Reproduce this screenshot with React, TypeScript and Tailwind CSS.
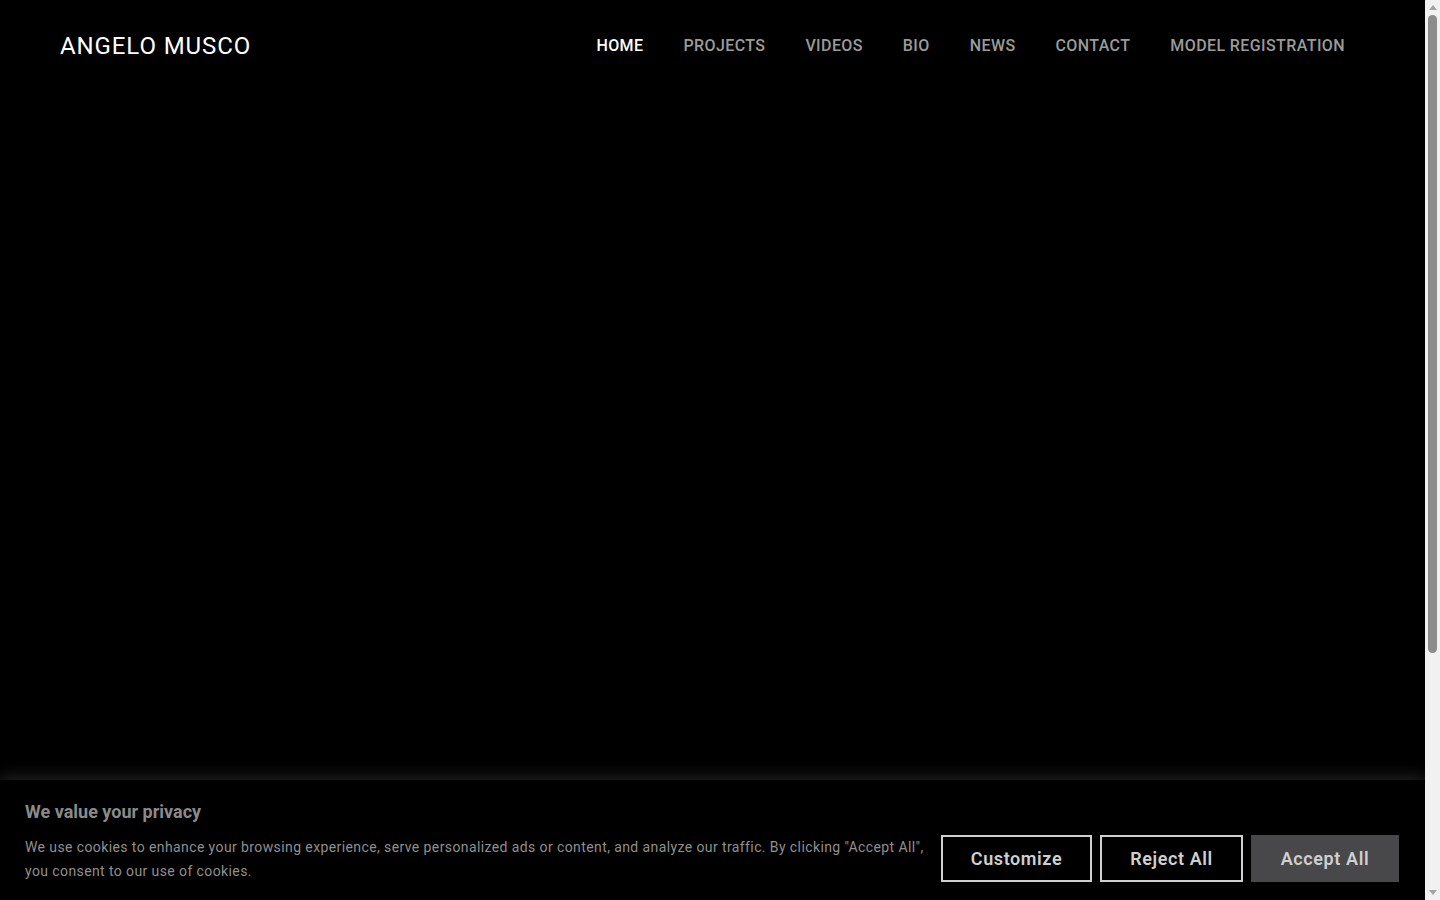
import React from "react";

const nav = ["HOME", "PROJECTS", "VIDEOS", "BIO", "NEWS", "CONTACT", "MODEL REGISTRATION"];

export default function App() {
  return (
    <div className="bg-black h-screen w-full overflow-hidden flex" style={{ fontFamily: "Roboto, 'Noto Sans', sans-serif" }}>
      <div className="flex-1 flex flex-col min-w-0">
        <header className="flex items-center justify-between h-[92px] pl-[60px] pr-[80px] shrink-0">
          <div className="text-white text-[24px] tracking-[0.9px] font-normal leading-none">ANGELO MUSCO</div>
          <nav className="flex items-center gap-[40px]">
            {nav.map((n, i) => (
              <a key={n} className={`text-[16px] font-medium tracking-[0.4px] leading-none ${i === 0 ? "text-white" : "text-[#9a9a9a]"}`}>{n}</a>
            ))}
          </nav>
        </header>

        <div className="flex-1" />

        <div className="h-[120px] shrink-0 bg-black shadow-[0_-4px_14px_rgba(70,70,70,0.45)] flex items-center justify-between pl-[25px] pr-[26px]">
          <div className="flex flex-col w-[912px] pt-[6px]">
            <div className="text-[18px] font-bold text-[#8a8a8a] leading-none">We value your privacy</div>
            <p className="mt-[14px] text-[14px] leading-[24px] tracking-[0.4px] text-[#8f8f8f]">
              We use cookies to enhance your browsing experience, serve personalized ads or content, and analyze our traffic. By clicking "Accept All", you consent to our use of cookies.
            </p>
          </div>
          <div className="flex items-center gap-[8px] mt-[36px]">
            <button className="w-[151px] h-[47px] border-2 border-[#cfcfcf] text-[#cfcfcf] text-[18px] font-semibold tracking-[0.6px] bg-black">Customize</button>
            <button className="w-[143px] h-[47px] border-2 border-[#cfcfcf] text-[#cfcfcf] text-[18px] font-semibold tracking-[0.6px] bg-black">Reject All</button>
            <button className="w-[148px] h-[47px] bg-[#48474a] text-[#cfcfcf] text-[18px] font-semibold tracking-[0.6px]">Accept All</button>
          </div>
        </div>
      </div>

      <div className="w-[15px] h-full bg-[#f1f1f1] flex flex-col items-center shrink-0">
        <div className="h-[15px] w-full flex items-center justify-center">
          <svg width="8" height="5" viewBox="0 0 8 5"><path d="M4 0 L8 5 L0 5 Z" fill="#a3a3a3" /></svg>
        </div>
        <div className="w-[9px] h-[638px] bg-[#8c8c8c] rounded-[5px]" />
        <div className="flex-1" />
        <div className="h-[15px] w-full flex items-center justify-center">
          <svg width="8" height="5" viewBox="0 0 8 5"><path d="M0 0 L8 0 L4 5 Z" fill="#a3a3a3" /></svg>
        </div>
      </div>
    </div>
  );
}
